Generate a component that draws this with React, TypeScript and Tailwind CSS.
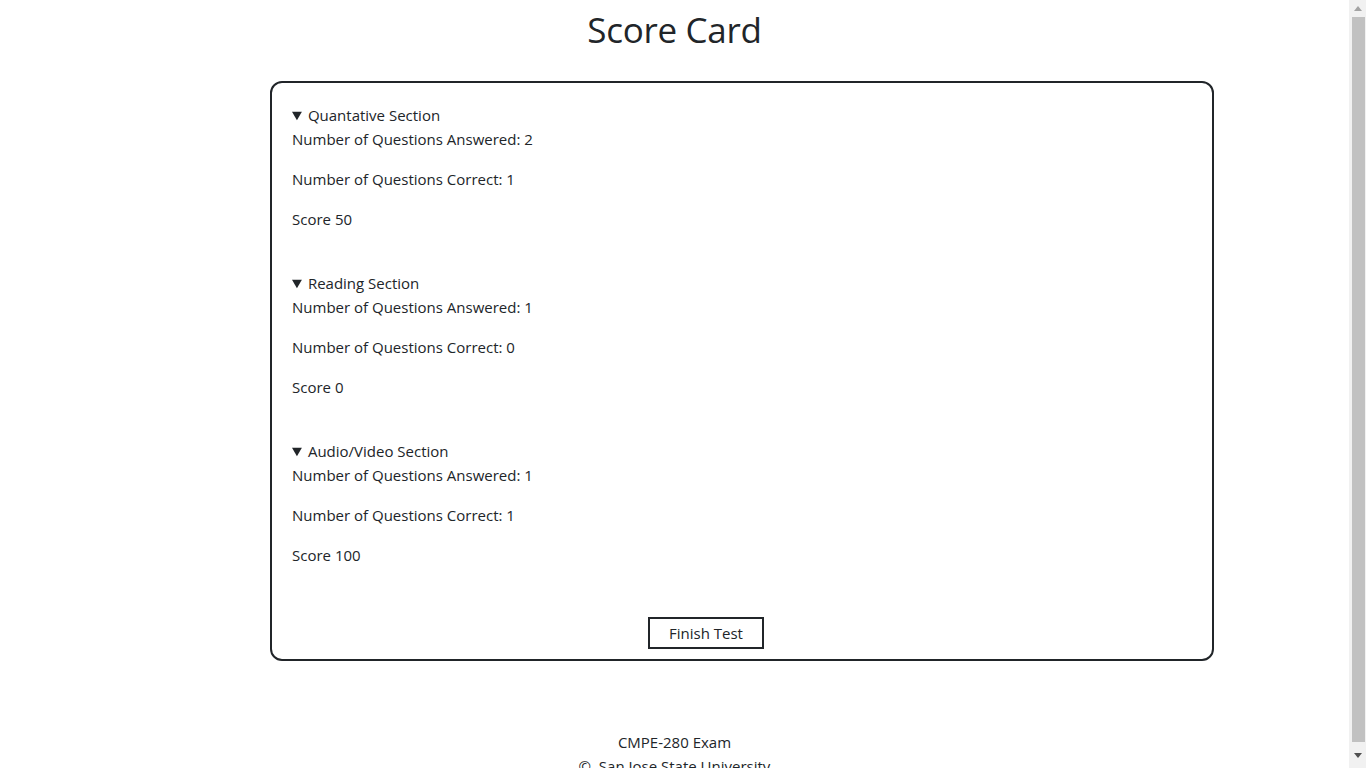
import React from "react";

const sections = [
  { name: "Quantative Section", answered: 2, correct: 1, score: 50 },
  { name: "Reading Section", answered: 1, correct: 0, score: 0 },
  { name: "Audio/Video Section", answered: 1, correct: 1, score: 100 },
];

export default function App() {
  return (
    <div className="flex h-[768px] w-full overflow-hidden bg-white">
      <div
        className="w-[1349px] h-[768px] overflow-hidden text-[#212529] text-[15px] leading-6"
        style={{ fontFamily: '"Open Sans", "Noto Sans", sans-serif' }}
      >
        <h1 className="text-center text-[35px] leading-[48px] pt-[6px] font-normal tracking-[-0.3px]">Score Card</h1>
        <div className="ml-[270px] w-[944px] mt-[27px] border-2 border-[#212529] rounded-[12px] pt-[20px] px-[20px] pb-[10px]">
          {sections.map((s) => (
            <div key={s.name} className="mb-[40px]">
              <details open>
                <summary className="cursor-pointer">{s.name}</summary>
                <p className="mb-4">Number of Questions Answered: {s.answered}</p>
                <p className="mb-4">Number of Questions Correct: {s.correct}</p>
                <p className="mb-4">Score {s.score}</p>
              </details>
            </div>
          ))}
          <div className="pl-[356px] pt-[10px]">
            <button className="w-[116px] h-[32px] border-2 border-[#212529] bg-white text-[15px] text-[#212529]">Finish Test</button>
          </div>
        </div>
        <footer className="text-center mt-[69px]">
          <p>CMPE-280 Exam</p>
          <p>©&nbsp; San Jose State University</p>
        </footer>
      </div>
      <div className="w-[17px] h-[768px] bg-[#f1f1f1] flex flex-col items-center shrink-0">
        <div className="h-[17px] w-full flex items-center justify-center">
          <svg width="8" height="5" viewBox="0 0 8 5"><path d="M4 0 L8 5 L0 5 Z" fill="#a3a3a3" /></svg>
        </div>
        <div className="w-[13px] ml-[1px] h-[725px] bg-[#c1c1c1]" />
        <div className="flex-1 w-full flex items-center justify-center">
          <svg width="8" height="5" viewBox="0 0 8 5"><path d="M0 0 L8 0 L4 5 Z" fill="#505050" /></svg>
        </div>
      </div>
    </div>
  );
}
